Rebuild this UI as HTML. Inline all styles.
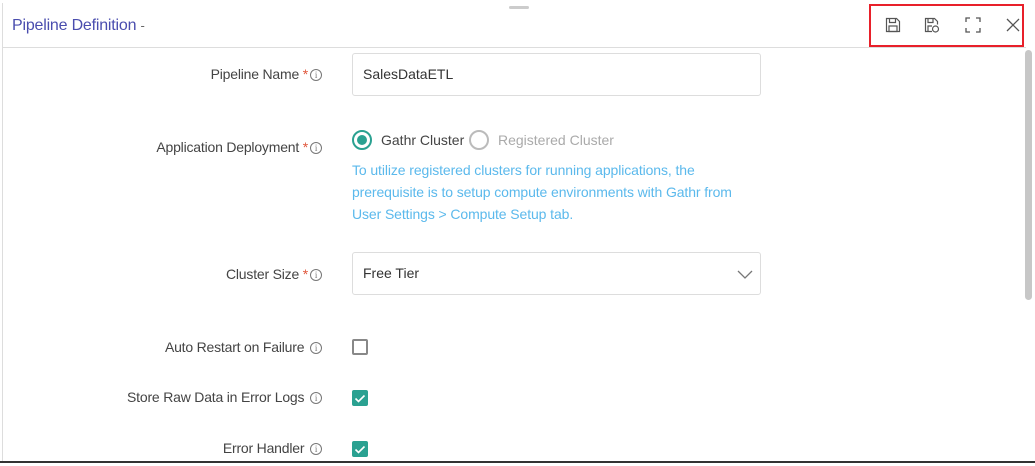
<!DOCTYPE html>
<html><head><style>
*{margin:0;padding:0;box-sizing:border-box}
body{width:1035px;height:466px;overflow:hidden;background:#fff;font-family:"Liberation Sans",Roboto,sans-serif;position:relative}
.panel{position:absolute;left:2px;top:3px;width:1024px;height:459px;border-left:1px solid #ddd;background:#fff}
.hdr{position:absolute;left:0;top:0;right:0;height:45px;border-bottom:1px solid #ddd}
.title{position:absolute;left:9px;top:14px;font-size:16px;color:#4a4dae;letter-spacing:-0.2px}
.title span{color:#666;font-size:13px}
.handle{position:absolute;left:506px;top:3px;width:20px;height:3px;background:#ccc;border-radius:2px}
.redbox{position:absolute;left:869px;top:4px;width:155px;height:43px;border:2px solid #e8202a}
.lbl{position:absolute;right:713px;font-size:14px;color:#444;white-space:nowrap;letter-spacing:-0.2px}
.lbl b{color:#e0573c;font-weight:normal}
.i{display:inline-block;width:12px;height:12px;border:1px solid #777;border-radius:50%;font-size:9px;line-height:10px;text-align:center;color:#777;vertical-align:1px;margin-left:2px;font-family:"Liberation Serif",serif}
.input{position:absolute;left:352px;width:409px;height:43px;border:1px solid #ddd;border-radius:3px;font-size:14px;color:#333;padding:12px 10px}
.cb{position:absolute;left:352px;width:16px;height:16px;border:2px solid #888;border-radius:2px}
.cb.on{background:#2aa191;border:none}
.help{position:absolute;left:352px;top:159px;font-size:14px;line-height:22px;color:#5bb9ec;width:395px;letter-spacing:-0.1px}
.scroll{position:absolute;left:1025px;top:50px;width:7px;height:250px;background:#c7c7c7;border-radius:4px}
.bottom{position:absolute;left:0;top:461px;width:1035px;height:5px;background:#fff;border-top:2px solid #333}
</style></head><body>
<div class="panel">
 <div class="hdr"><div class="title">Pipeline Definition <span>-</span></div>
 <div class="handle"></div></div>
</div>
<div class="redbox"></div>
<svg style="position:absolute;left:884px;top:16px" width="18" height="18" viewBox="0 0 18 18" fill="none" stroke="#555" stroke-width="1.2"><path d="M2.5 2.5h10l3 3v10h-13z"/><path d="M5.5 2.5v4h6v-4"/><rect x="5" y="10" width="8" height="5.5"/></svg>
<svg style="position:absolute;left:923px;top:16px" width="18" height="18" viewBox="0 0 18 18" fill="none" stroke="#555" stroke-width="1.2"><path d="M9 15.5H2.5v-13h9l3 3v3"/><path d="M5 2.5v4h5v-4"/><path d="M5 15v-5h4"/><circle cx="12.5" cy="13" r="3"/></svg>
<svg style="position:absolute;left:964px;top:16px" width="18" height="18" viewBox="0 0 18 18" fill="none" stroke="#555" stroke-width="1.3"><path d="M2 6V2h4M12 2h4v4M16 12v4h-4M6 16H2v-4"/></svg>
<svg style="position:absolute;left:1005px;top:17px" width="16" height="16" viewBox="0 0 16 16" stroke="#555" stroke-width="1.3"><path d="M2 2l12 12M14 2L2 14"/></svg>
<div class="lbl" style="top:66px">Pipeline Name <b>*</b><span class="i">i</span></div>
<div class="input" style="top:53px">SalesDataETL</div>
<div class="lbl" style="top:139px">Application Deployment <b>*</b><span class="i">i</span></div>
<div style="position:absolute;left:352px;top:130px;width:20px;height:20px;border:2px solid #2aa191;border-radius:50%"><div style="position:absolute;left:3px;top:3px;width:10px;height:10px;background:#2aa191;border-radius:50%"></div></div>
<div style="position:absolute;left:381px;top:132px;font-size:14px;color:#444">Gathr Cluster</div>
<div style="position:absolute;left:469px;top:130px;width:20px;height:20px;border:2px solid #bbb;border-radius:50%"></div>
<div style="position:absolute;left:498px;top:132px;font-size:14px;color:#aaa">Registered Cluster</div>
<div class="help">To utilize registered clusters for running applications, the prerequisite is to setup compute environments with Gathr from User Settings &gt; Compute Setup tab.</div>
<div class="lbl" style="top:266px">Cluster Size <b>*</b><span class="i">i</span></div>
<div class="input" style="top:252px">Free Tier</div>
<svg style="position:absolute;left:737px;top:270px" width="16" height="10" viewBox="0 0 16 10" fill="none" stroke="#777" stroke-width="1.3"><path d="M1 1l7 7 7-7"/></svg>
<div class="lbl" style="top:339px">Auto Restart on Failure <span class="i">i</span></div>
<div class="cb" style="top:339px"></div>
<div class="lbl" style="top:389px">Store Raw Data in Error Logs <span class="i">i</span></div>
<div class="cb on" style="top:390px"><svg width="16" height="16" viewBox="0 0 16 16" fill="none" stroke="#fff" stroke-width="1.6"><path d="M3.5 8.5l3 3 6-6"/></svg></div>
<div class="lbl" style="top:440px">Error Handler <span class="i">i</span></div>
<div class="cb on" style="top:441px"><svg width="16" height="16" viewBox="0 0 16 16" fill="none" stroke="#fff" stroke-width="1.6"><path d="M3.5 8.5l3 3 6-6"/></svg></div>
<div class="scroll"></div>
<div class="bottom"></div>
</body></html>
